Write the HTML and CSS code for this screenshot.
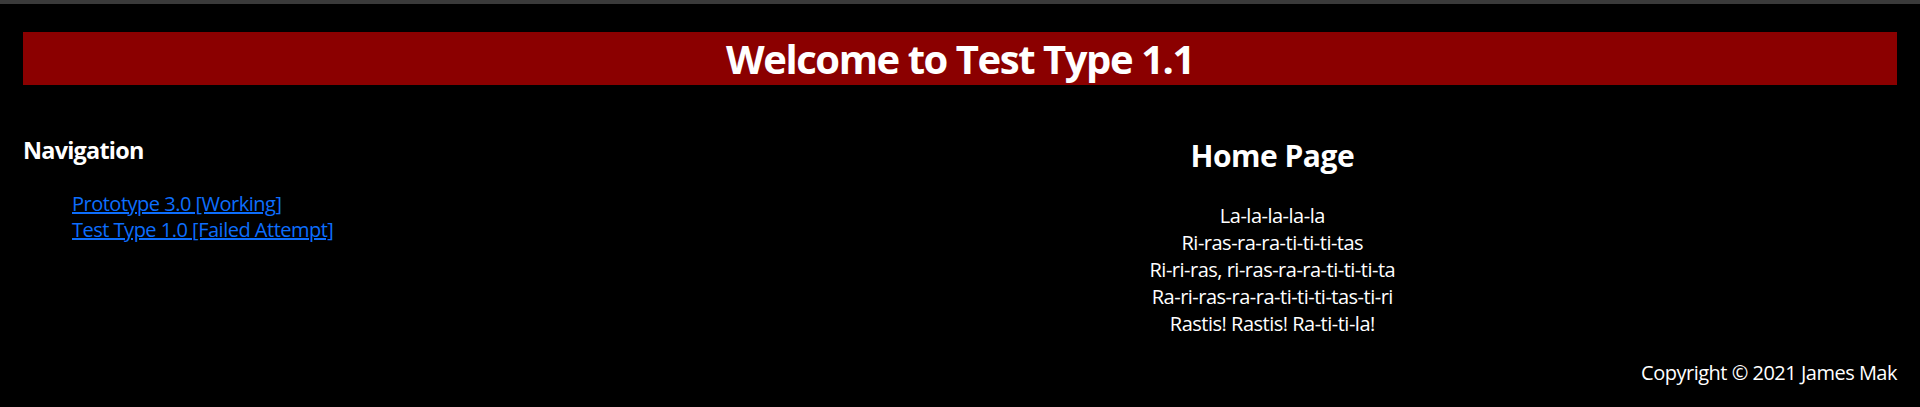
FILE: index.html
```html
<!DOCTYPE html>
<html lang="en">
<head>
<meta charset="utf-8">
<title>Test Type 1.1</title>
<link rel="stylesheet" href="styles.css">
</head>
<body>
<div class="topbar"></div>
<div class="page">
  <header class="banner">
    <h1 class="banner-title">Welcome to Test Type 1.1</h1>
  </header>
  <div class="layout">
    <nav class="nav">
      <h3 class="nav-title">Navigation</h3>
      <ul class="nav-list">
        <li><a class="nav-link" href="#">Prototype 3.0 [Working]</a></li>
        <li><a class="nav-link" href="#">Test Type 1.0 [Failed Attempt]</a></li>
      </ul>
    </nav>
    <main class="main">
      <h2 class="main-title">Home Page</h2>
      <p class="poem">La-la-la-la-la<br>Ri-ras-ra-ra-ti-ti-ti-tas<br>Ri-ri-ras, ri-ras-ra-ra-ti-ti-ti-ta<br>Ra-ri-ras-ra-ra-ti-ti-ti-tas-ti-ri<br>Rastis! Rastis! Ra-ti-ti-la!</p>
    </main>
  </div>
  <footer class="footer">Copyright © 2021 James Mak</footer>
</div>
</body>
</html>
```
FILE: styles.css
```css
html, body {
  margin: 0;
  padding: 0;
  background: #000;
  color: #fff;
  font-family: "Open Sans", "Noto Sans", "Liberation Sans", sans-serif;
  font-size: 20px;
  letter-spacing: -0.025em;
}

.topbar {
  height: 4px;
  background: #3a3a3a;
}

.page {
  padding: 28px 23px 0 23px;
}

.banner {
  background: #8b0000;
  height: 53px;
}

.banner-title {
  margin: 0;
  font-size: 40px;
  line-height: 53px;
  font-weight: 700;
  text-align: center;
  letter-spacing: -0.036em;
}

.layout {
  display: grid;
  grid-template-columns: 1fr 2fr;
  margin-top: 50px;
}

.nav-title {
  margin: 0 0 25px 0;
  font-size: 23.4px;
  line-height: 31px;
  font-weight: 700;
  letter-spacing: -0.032em;
}

.nav-list {
  list-style: none;
  margin: 0;
  padding: 0 0 0 49px;
  font-size: 20px;
  line-height: 26.3px;
}

.nav-link {
  color: #0d6efd;
  text-decoration: underline;
}

.main {
  text-align: center;
}

.main-title {
  margin: 1px 0 27px;
  font-size: 30px;
  line-height: 40px;
  font-weight: 700;
}

.poem {
  margin: 0;
  font-size: 20px;
  line-height: 26.9px;
}

.footer {
  margin-top: 21px;
  text-align: right;
  font-size: 20px;
  line-height: 27px;
}
```
